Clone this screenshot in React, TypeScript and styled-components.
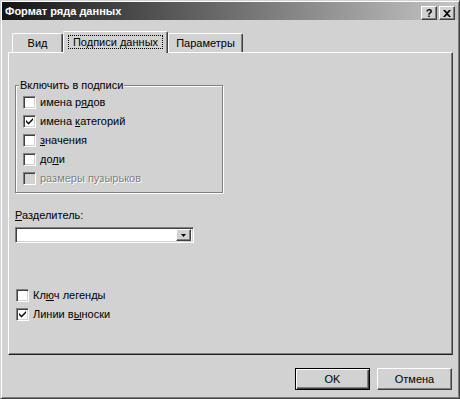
import React from "react";
import styled, { createGlobalStyle } from "styled-components";

const face = "#d2d2d2";

const GlobalStyle = createGlobalStyle`
    html, body {
        margin: 0;
        padding: 0;
        background: ${face};
    }
    body {
        font-family: "Liberation Sans", Arial, sans-serif;
        font-size: 11px;
        color: #000;
    }
`;

type checkItem = {
    before: string;
    key: string;
    after: string;
    checked?: boolean;
    disabled?: boolean;
};

const labelItems: checkItem[] = [
    { before: "имена р", key: "я", after: "дов" },
    { before: "имена ", key: "к", after: "атегорий", checked: true },
    { before: "", key: "з", after: "начения" },
    { before: "до", key: "л", after: "и" },
    { before: "размеры пузырьков", key: "", after: "", disabled: true },
];

const extraItems: checkItem[] = [
    { before: "Кл", key: "ю", after: "ч легенды" },
    { before: "Линии в", key: "ы", after: "носки", checked: true },
];

const App = () => {
    return (
        <>
            <GlobalStyle />
            <Window>
                <TitleBar>
                    <TitleText>Формат ряда данных</TitleText>
                    <TitleButtons>
                        <TitleButton>?</TitleButton>
                        <TitleButton>
                            <svg width="8" height="7" viewBox="0 0 8 7">
                                <path
                                    d="M0 0h2l2 2 2-2h2L5 3.5 8 7H6L4 5 2 7H0l3-3.5z"
                                    fill="#000"
                                />
                            </svg>
                        </TitleButton>
                    </TitleButtons>
                </TitleBar>
                <Body>
                    <TabRow>
                        <Tab width={51}>Вид</Tab>
                        <Tab width={105} active>
                            <FocusLabel>Подписи данных</FocusLabel>
                        </Tab>
                        <Tab width={75}>Параметры</Tab>
                    </TabRow>
                    <Panel>
                        <GroupBox>
                            <Legend>Включить в подписи</Legend>
                            {labelItems.map((item, i) => renderCheck(item, i))}
                        </GroupBox>
                        <FieldLabel>
                            <u>Р</u>азделитель:
                        </FieldLabel>
                        <Combo>
                            <ComboButton>
                                <svg width="5" height="3" viewBox="0 0 5 3">
                                    <path d="M0 0h5L2.5 3z" fill="#000" />
                                </svg>
                            </ComboButton>
                        </Combo>
                        <BottomChecks>
                            {extraItems.map((item, i) => renderCheck(item, i))}
                        </BottomChecks>
                    </Panel>
                    <ButtonRow>
                        <PushButton isDefault>OK</PushButton>
                        <PushButton>Отмена</PushButton>
                    </ButtonRow>
                </Body>
            </Window>
        </>
    );

    function renderCheck(item: checkItem, index: number) {
        return (
            <CheckRow key={index}>
                <CheckBox disabled={item.disabled}>
                    {item.checked && (
                        <svg width="7" height="7" viewBox="0 0 7 7">
                            <path
                                d="M0 2l2.5 2.5L7 0v2L2.5 6.5 0 4z"
                                fill="#000"
                            />
                        </svg>
                    )}
                </CheckBox>
                <CheckText disabled={item.disabled}>
                    {item.before}
                    {item.key && <u>{item.key}</u>}
                    {item.after}
                </CheckText>
            </CheckRow>
        );
    }
};

export default App;

const Window = styled.div`
    box-sizing: border-box;
    width: 460px;
    height: 399px;
    display: flex;
    flex-direction: column;
    background: ${face};
    border: 1px solid;
    border-color: ${face} #404040 #404040 ${face};
    box-shadow: inset 1px 1px 0 #fff, inset -1px -1px 0 #808080;
    padding: 1px;
`;

const TitleBar = styled.div`
    height: 18px;
    display: flex;
    align-items: flex-start;
    justify-content: space-between;
    background: linear-gradient(to right, #121212 0%, #3a3a3a 20%, #c4c4c4 100%);
`;

const TitleText = styled.span`
    color: #fff;
    font-weight: bold;
    font-size: 11px;
    line-height: 18px;
    padding-left: 3px;
`;

const TitleButtons = styled.div`
    display: flex;
    gap: 2px;
    margin-top: 4px;
    padding-right: 3px;
`;

const TitleButton = styled.div`
    box-sizing: border-box;
    width: 16px;
    height: 14px;
    display: flex;
    align-items: center;
    justify-content: center;
    background: ${face};
    border: 1px solid;
    border-color: #fff #404040 #404040 #fff;
    box-shadow: inset -1px -1px 0 #808080;
    font-weight: bold;
    font-size: 11px;
    line-height: 12px;
`;

const Body = styled.div`
    display: flex;
    flex-direction: column;
    padding: 11px 5px 0 6px;
`;

const TabRow = styled.div`
    display: flex;
    align-items: flex-end;
    height: 21px;
    padding-left: 4px;
`;

const Tab = styled.div<{ width: number; active?: boolean }>`
    position: relative;
    z-index: ${(p) => (p.active ? 1 : 0)};
    box-sizing: border-box;
    width: ${(p) => p.width}px;
    height: ${(p) => (p.active ? 22 : 19)}px;
    margin-bottom: ${(p) => (p.active ? -1 : 0)}px;
    display: flex;
    align-items: center;
    justify-content: center;
    padding-bottom: ${(p) => (p.active ? 2 : 0)}px;
    background: ${face};
    border-top: 1px solid #fff;
    border-left: 1px solid #fff;
    border-right: 1px solid #404040;
    border-radius: 2px 2px 0 0;
    box-shadow: inset -1px 0 0 #808080;
`;

const FocusLabel = styled.span`
    border: 1px dotted #000;
    padding: 0 4px;
    line-height: 12px;
`;

const Panel = styled.div`
    box-sizing: border-box;
    height: 303px;
    display: flex;
    flex-direction: column;
    align-items: flex-start;
    padding: 32px 0 0 6px;
    border-top: 1px solid #fff;
    border-left: 1px solid #fff;
    border-right: 1px solid #404040;
    border-bottom: 1px solid #202020;
    box-shadow: inset -1px -1px 0 #808080;
`;

const GroupBox = styled.div`
    position: relative;
    box-sizing: border-box;
    width: 208px;
    height: 108px;
    padding: 7px 0 0 7px;
    border: 1px solid #808080;
    box-shadow: inset 1px 1px 0 #fff, 1px 1px 0 #fff;
`;

const Legend = styled.span`
    position: absolute;
    top: -7px;
    left: 3px;
    padding: 0 1px;
    line-height: 13px;
    background: ${face};
`;

const CheckRow = styled.div`
    display: flex;
    align-items: center;
    gap: 4px;
    height: 19px;
`;

const CheckBox = styled.span<{ disabled?: boolean }>`
    box-sizing: border-box;
    width: 13px;
    height: 13px;
    display: flex;
    align-items: center;
    justify-content: center;
    background: ${(p) => (p.disabled ? face : "#fff")};
    border: 1px solid;
    border-color: #808080 #fff #fff #808080;
    box-shadow: inset 1px 1px 0 #404040, inset -1px -1px 0 ${face};
`;

const CheckText = styled.span<{ disabled?: boolean }>`
    line-height: 13px;
    color: ${(p) => (p.disabled ? "#808080" : "#000")};
    text-shadow: ${(p) => (p.disabled ? "1px 1px 0 #fff" : "none")};
`;

const FieldLabel = styled.div`
    margin-top: 16px;
    line-height: 13px;
`;

const Combo = styled.div`
    box-sizing: border-box;
    width: 179px;
    height: 16px;
    margin-top: 5px;
    display: flex;
    justify-content: flex-end;
    align-items: center;
    padding-right: 2px;
    background: #fff;
    border: 1px solid;
    border-color: #808080 #fff #fff #808080;
    box-shadow: inset 1px 1px 0 #404040, inset -1px -1px 0 ${face};
`;

const ComboButton = styled.div`
    box-sizing: border-box;
    width: 15px;
    height: 12px;
    display: flex;
    align-items: center;
    justify-content: center;
    background: ${face};
    border: 1px solid;
    border-color: #fff #404040 #404040 #fff;
    box-shadow: inset -1px -1px 0 #808080;
`;

const BottomChecks = styled.div`
    margin-top: 43px;
    padding-left: 1px;
`;

const ButtonRow = styled.div`
    display: flex;
    justify-content: flex-end;
    gap: 7px;
    margin-top: 13px;
    padding-right: 1px;
`;

const PushButton = styled.div<{ isDefault?: boolean }>`
    box-sizing: border-box;
    width: 75px;
    height: 22px;
    display: flex;
    align-items: center;
    justify-content: center;
    background: ${face};
    border: 1px solid;
    border-color: ${(p) =>
        p.isDefault ? "#000" : "#fff #404040 #404040 #fff"};
    box-shadow: ${(p) =>
        p.isDefault
            ? "inset 1px 1px 0 #fff, inset -1px -1px 0 #404040, inset -2px -2px 0 #808080"
            : "inset -1px -1px 0 #808080"};
`;
